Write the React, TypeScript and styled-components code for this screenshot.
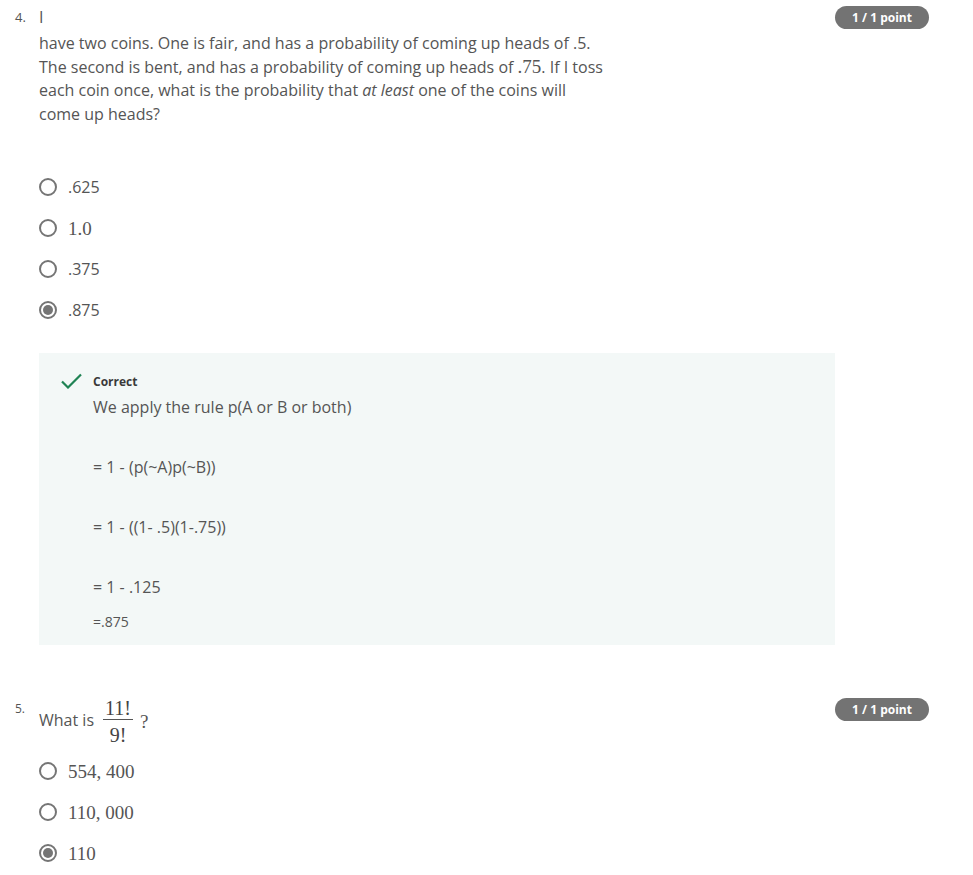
import styled, { createGlobalStyle } from "styled-components";

const GlobalStyle = createGlobalStyle`
  html, body {
    margin: 0;
    padding: 0;
    background: #ffffff;
  }
  body {
    font-family: "Open Sans", "Noto Sans", sans-serif;
    color: #555555;
  }
`;

const Page = styled.div`
  width: 973px;
  box-sizing: border-box;
  padding: 5px 44px 0 15px;
`;

const Question = styled.section<{ $top?: number }>`
  display: grid;
  grid-template-columns: 24px 1fr 94px;
  margin-top: ${(p) => p.$top ?? 0}px;
`;

const Num = styled.div<{ $size: number; $top: number }>`
  font-size: ${(p) => p.$size}px;
  line-height: 24px;
  padding-top: ${(p) => p.$top}px;
  color: #555;
`;

const Body = styled.div`
  min-width: 0;
`;

const Badge = styled.div<{ $top: number }>`
  margin-top: ${(p) => p.$top}px;
  height: 23px;
  border-radius: 12px;
  background: #737373;
  color: #fff;
  font-size: 12px;
  font-weight: 700;
  display: flex;
  align-items: center;
  justify-content: center;
  align-self: start;
`;

const Lead = styled.div`
  font-size: 16px;
  line-height: 24px;
`;

const Prompt = styled.p`
  margin: 3px 0 0;
  max-width: 567px;
  font-size: 16px;
  line-height: 23.7px;
`;

const Math = styled.span`
  font-family: "Liberation Serif", "DejaVu Serif", serif;
  font-size: 19px;
  line-height: 1;
`;

const Options = styled.div<{ $top: number }>`
  display: flex;
  flex-direction: column;
  margin-top: ${(p) => p.$top}px;
`;

const Option = styled.label`
  display: flex;
  align-items: center;
  gap: 11px;
  height: 41px;
  font-size: 16px;
  color: #555;
`;

const Radio = styled.span<{ $checked?: boolean }>`
  width: 18px;
  height: 18px;
  box-sizing: border-box;
  border: 2px solid #757575;
  border-radius: 50%;
  display: flex;
  align-items: center;
  justify-content: center;
  flex-shrink: 0;

  &::after {
    content: "";
    width: 10px;
    height: 10px;
    border-radius: 50%;
    background: ${(p) => (p.$checked ? "#757575" : "transparent")};
  }
`;

const Feedback = styled.div`
  margin-top: 22.5px;
  background: #f3f8f7;
  padding: 20px 22px 13px;
  display: grid;
  grid-template-columns: 21px 1fr;
  column-gap: 11px;
`;

const FeedbackHead = styled.div`
  height: 16px;
  display: flex;
  align-items: center;
  font-size: 12px;
  font-weight: 700;
  color: #3a3a3a;
`;

const FeedbackLine = styled.p<{ $size?: number; $lh?: number; $after?: number }>`
  margin: 0 0 ${(p) => p.$after ?? 0}px;
  font-size: ${(p) => p.$size ?? 16}px;
  line-height: ${(p) => p.$lh ?? 24}px;
  color: #555;
`;

const FeedbackText = styled.div`
  grid-column: 2;
  padding-top: 6px;
`;

const AskRow = styled.div`
  display: flex;
  align-items: center;
  font-size: 16px;
`;

const AskText = styled.span`
  margin-top: -2px;
`;

const Fraction = styled.span`
  display: inline-flex;
  flex-direction: column;
  align-items: center;
  margin: 0 7px 0 9px;
  font-family: "Liberation Serif", "DejaVu Serif", serif;
  font-size: 20px;
  color: #444;
`;

const Numer = styled.span`
  line-height: 22px;
  padding: 0 2px;
`;

const Bar = styled.span`
  align-self: stretch;
  height: 1px;
  background: #555;
`;

const Denom = styled.span`
  line-height: 22px;
  padding-top: 4px;
`;

const Check = () => (
  <svg width="21" height="16" viewBox="0 0 21 16">
    <path d="M1 8.5 L7 14.5 L20 1.5" fill="none" stroke="#1f8354" strokeWidth="2.2" />
  </svg>
);

const q4 = [
  { label: ".625", math: false, checked: false },
  { label: "1.0", math: true, checked: false },
  { label: ".375", math: false, checked: false },
  { label: ".875", math: false, checked: true },
];

const q5 = [
  { label: "554, 400", checked: false },
  { label: "110, 000", checked: false },
  { label: "110", checked: true },
];

export default function App() {
  return (
    <>
      <GlobalStyle />
      <Page>
        <Question>
          <Num $size={13} $top={0}>4.</Num>
          <Body>
            <Lead>I</Lead>
            <Prompt>
              have two coins. One is fair, and has a probability of coming up heads of .5. The
              second is bent, and has a probability of coming up heads of <Math>.75</Math>. If I
              toss each coin once, what is the probability that <em>at least</em> one of the coins
              will come up heads?
            </Prompt>
            <Options $top={40}>
              {q4.map((o) => (
                <Option key={o.label}>
                  <Radio $checked={o.checked} />
                  {o.math ? <Math>{o.label}</Math> : o.label}
                </Option>
              ))}
            </Options>
            <Feedback>
              <Check />
              <FeedbackHead>Correct</FeedbackHead>
              <FeedbackText>
                <FeedbackLine $after={36}>We apply the rule p(A or B or both)</FeedbackLine>
                <FeedbackLine $after={36}>= 1 - (p(~A)p(~B))</FeedbackLine>
                <FeedbackLine $after={36}>= 1 - ((1- .5)(1-.75))</FeedbackLine>
                <FeedbackLine $after={11.5}>= 1 - .125</FeedbackLine>
                <FeedbackLine $size={14} $lh={21}>=.875</FeedbackLine>
              </FeedbackText>
            </Feedback>
          </Body>
          <Badge $top={1}>1 / 1 point</Badge>
        </Question>

        <Question $top={52}>
          <Num $size={12} $top={0}>5.</Num>
          <Body>
            <AskRow>
              <AskText>What is</AskText>
              <Fraction>
                <Numer>11!</Numer>
                <Bar />
                <Denom>9!</Denom>
              </Fraction>
              <Math>?</Math>
            </AskRow>
            <Options $top={4.7}>
              {q5.map((o) => (
                <Option key={o.label}>
                  <Radio $checked={o.checked} />
                  <Math>{o.label}</Math>
                </Option>
              ))}
            </Options>
          </Body>
          <Badge $top={1.5}>1 / 1 point</Badge>
        </Question>
      </Page>
    </>
  );
}
